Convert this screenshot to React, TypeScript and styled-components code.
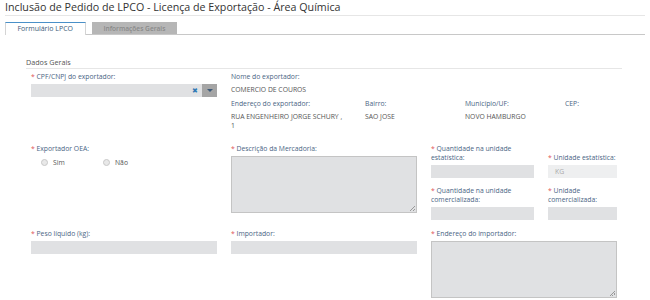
import styled, { createGlobalStyle } from 'styled-components';

const GlobalStyle = createGlobalStyle`
  body {
    margin: 0;
    background: #fff;
    font-family: 'Open Sans', sans-serif;
  }
`;

const App = () => {
  return (
    <>
      <GlobalStyle />
      <Page>
        <Title>Inclusão de Pedido de LPCO - Licença de Exportação - Área Química</Title>
        <Tabs>
          <Tab $active>Formulário LPCO</Tab>
          <Tab>Informações Gerais</Tab>
        </Tabs>
        <Section>
          <SectionTitle>Dados Gerais</SectionTitle>
          <Grid>
            <Field>
              <Label $required>CPF/CNPJ do exportador:</Label>
              <Select>
                <ClearIcon>✖</ClearIcon>
                <Caret>
                  <svg width="6" height="4" viewBox="0 0 6 4">
                    <path d="M0 0h6L3 3z" fill="#3d5a78" />
                  </svg>
                </Caret>
              </Select>
            </Field>
            <InfoGrid>
              <Info $span={4}>
                <InfoLabel>Nome do exportador:</InfoLabel>
                <InfoValue>COMERCIO DE COUROS</InfoValue>
              </Info>
              <Info>
                <InfoLabel>Endereço do exportador:</InfoLabel>
                <InfoValue>RUA ENGENHEIRO JORGE SCHURY , 1</InfoValue>
              </Info>
              <Info>
                <InfoLabel>Bairro:</InfoLabel>
                <InfoValue>SAO JOSE</InfoValue>
              </Info>
              <Info>
                <InfoLabel>Município/UF:</InfoLabel>
                <InfoValue>NOVO HAMBURGO</InfoValue>
              </Info>
              <Info>
                <InfoLabel>CEP:</InfoLabel>
              </Info>
            </InfoGrid>

            <Field>
              <Label $required>Exportador OEA:</Label>
              <Radios>
                <Radio>
                  <RadioDot />
                  Sim
                </Radio>
                <Radio>
                  <RadioDot />
                  Não
                </Radio>
              </Radios>
            </Field>
            <Field>
              <Label $required>Descrição da Mercadoria:</Label>
              <TextArea $height={57} />
            </Field>
            <SubGrid>
              <Field $bottom>
                <Label $required>Quantidade na unidade estatística:</Label>
                <Input />
              </Field>
              <Field $bottom>
                <Label $required>Unidade estatística:</Label>
                <Input $readonly>KG</Input>
              </Field>
              <Field $bottom>
                <Label $required>Quantidade na unidade comercializada:</Label>
                <Input />
              </Field>
              <Field $bottom>
                <Label $required>Unidade comercializada:</Label>
                <Input />
              </Field>
            </SubGrid>

            <Field>
              <Label $required>Peso líquido (kg):</Label>
              <Input />
            </Field>
            <Field>
              <Label $required>Importador:</Label>
              <Input />
            </Field>
            <Field>
              <Label $required>Endereço do importador:</Label>
              <TextArea $height={57} />
            </Field>
          </Grid>
        </Section>
      </Page>
    </>
  );
};

export default App;

const Page = styled.div`
  padding: 0 5px;
  width: 640px;
`;

const Title = styled.h1`
  margin: 0;
  padding: 1px 0 1px;
  font-size: 10.7px;
  font-weight: 400;
  color: #333;
  line-height: 13px;
  border-bottom: 1px solid #e6e6e6;
`;

const Tabs = styled.div`
  display: flex;
  align-items: flex-end;
  gap: 6px;
  margin-top: 6px;
  height: 12px;
  border-bottom: 1px solid #c8c8c8;
`;

const Tab = styled.div<{ $active?: boolean }>`
  height: ${(p) => (p.$active ? '12px' : '11px')};
  line-height: ${(p) => (p.$active ? '12px' : '11px')};
  padding: 0 ${(p) => (p.$active ? '11.5px' : '11px')};
  font-size: ${(p) => (p.$active ? '7px' : '6.6px')};
  color: ${(p) => (p.$active ? '#3d5a78' : '#8a8a8a')};
  font-weight: ${(p) => (p.$active ? 400 : 600)};
  background: ${(p) => (p.$active ? '#fff' : '#b6b6b6')};
  border-top: 1px solid ${(p) => (p.$active ? '#4a90c8' : '#b6b6b6')};
  border-left: 1px solid ${(p) => (p.$active ? '#d4d4d4' : '#b6b6b6')};
  border-right: 1px solid ${(p) => (p.$active ? '#d4d4d4' : '#b6b6b6')};
  margin-bottom: ${(p) => (p.$active ? '-1px' : '0')};
`;

const Section = styled.div`
  padding: 22px 23px 0 21px;
`;

const SectionTitle = styled.div`
  font-size: 7.2px;
  color: #555;
  line-height: 10px;
  padding-bottom: 1px;
  border-bottom: 1px solid #e6e6e6;
`;

const Grid = styled.div`
  display: grid;
  grid-template-columns: 186px 186px 186px;
  align-items: start;
  column-gap: 14px;
  row-gap: 9px;
  padding: 3px 5px 0;
`;

const Field = styled.div<{ $bottom?: boolean }>`
  display: flex;
  flex-direction: column;
  justify-content: ${(p) => (p.$bottom ? 'flex-end' : 'flex-start')};
  height: ${(p) => (p.$bottom ? '100%' : 'auto')};
`;

const Label = styled.div<{ $required?: boolean }>`
  font-size: 6.8px;
  line-height: 9px;
  color: #4a6584;
  margin-bottom: 3px;
  &::before {
    content: ${(p) => (p.$required ? "'* '" : "''")};
    color: #e05555;
  }
`;

const Select = styled.div`
  display: flex;
  align-items: center;
  justify-content: flex-end;
  height: 13px;
  background: #e0e1e3;
`;

const ClearIcon = styled.span`
  font-size: 7px;
  color: #2f79b5;
  margin-right: 4px;
  line-height: 13px;
`;

const Caret = styled.span`
  display: flex;
  align-items: center;
  justify-content: center;
  width: 15px;
  height: 13px;
  background: #a5a5a5;
`;

const InfoGrid = styled.div`
  grid-column: span 2;
  display: grid;
  grid-template-columns: 134px 100px 100px 52px;
  row-gap: 5px;
  margin-bottom: 5px;
`;

const Info = styled.div<{ $span?: number }>`
  grid-column: span ${(p) => p.$span || 1};
`;

const InfoLabel = styled.div`
  font-size: 6.8px;
  line-height: 9px;
  color: #4a6584;
  margin-bottom: 4px;
`;

const InfoValue = styled.div`
  font-size: 6.8px;
  line-height: 9px;
  color: #555;
  padding-right: 19px;
`;

const Radios = styled.div`
  display: flex;
  padding: 2px 0 0 10px;
`;

const Radio = styled.label`
  display: flex;
  align-items: center;
  gap: 5px;
  font-size: 6.8px;
  line-height: 9px;
  color: #555;
  width: 62px;
`;

const RadioDot = styled.span`
  width: 5px;
  height: 5px;
  border-radius: 50%;
  border: 1px solid #c8c8c8;
  background: #e8e8e8;
`;

const TextArea = styled.div<{ $height: number }>`
  position: relative;
  height: ${(p) => p.$height}px;
  background: #e0e1e3;
  border: 1px solid #c4c4c4;
  box-sizing: border-box;

  &::after {
    content: '';
    position: absolute;
    right: 1px;
    bottom: 1px;
    width: 5px;
    height: 5px;
    background: linear-gradient(135deg, transparent 45%, #999 45%, #999 55%, transparent 55%, transparent 70%, #999 70%, #999 80%, transparent 80%);
  }
`;

const Input = styled.div<{ $readonly?: boolean }>`
  height: 13px;
  line-height: 13px;
  padding-left: 7px;
  font-size: 6.8px;
  color: #aaa;
  background: ${(p) => (p.$readonly ? '#eeeff0' : '#e0e1e3')};
`;

const SubGrid = styled.div`
  display: grid;
  grid-template-columns: 103px 69px;
  column-gap: 14px;
  row-gap: 8px;
`;
